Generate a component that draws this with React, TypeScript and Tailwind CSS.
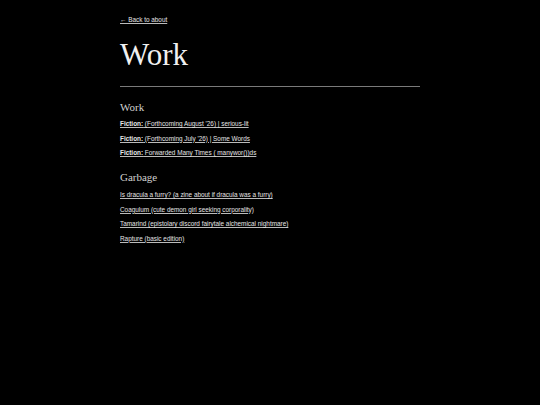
import React from "react";

function L({ children }: { children: React.ReactNode }) {
  return <a className="underline text-[#e6e6e6] decoration-[#bbbbbb]" href="#">{children}</a>;
}

export default function App() {
  return (
    <div className="w-[540px] h-[405px] bg-black text-[#e6e6e6] font-['Liberation_Sans',Arial,sans-serif]">
      <div className="w-[300px] mx-auto pt-[15px]">
        <div className="text-[6.4px] leading-[10px]">
          <L>← Back to about</L>
        </div>
        <h1 className="font-['Liberation_Serif',serif] text-[31px] leading-[34px] mt-[13px] text-[#f0f0f0]">Work</h1>
        <div className="h-px bg-[#7a7a7a] mt-[14px]" />
        <h2 className="font-['Liberation_Serif',serif] text-[11px] leading-[14px] mt-[13px] text-[#d0d0d0]">Work</h2>
        <div className="flex flex-col gap-[4.5px] mt-[5px] text-[6.4px] leading-[10px]">
          <div><L><b>Fiction:</b> (Forthcoming August '26) | serious-lit</L></div>
          <div><L><b>Fiction:</b> (Forthcoming July '26) | Some Words</L></div>
          <div><L><b>Fiction:</b> Forwarded Many Times ( manywor())ds</L></div>
        </div>
        <h2 className="font-['Liberation_Serif',serif] text-[11px] leading-[14px] mt-[12px] text-[#d0d0d0]">Garbage</h2>
        <div className="flex flex-col gap-[4.5px] mt-[6px] text-[6.4px] leading-[10px]">
          <div><L>Is dracula a furry? (a zine about if dracula was a furry)</L></div>
          <div><L>Coagulum (cute demon girl seeking corporality)</L></div>
          <div><L>Tamarind (epistolary discord fairytale alchemical nightmare)</L></div>
          <div><L>Rapture (basic edition)</L></div>
        </div>
      </div>
    </div>
  );
}
